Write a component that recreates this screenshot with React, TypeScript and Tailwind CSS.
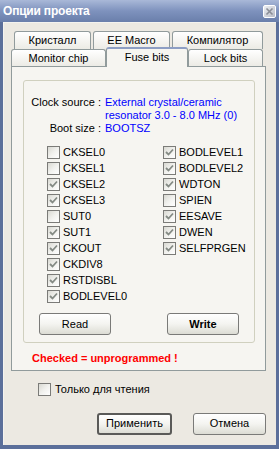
import React from "react";

const leftBits: [string, boolean][] = [
	["CKSEL0", false],
	["CKSEL1", false],
	["CKSEL2", true],
	["CKSEL3", true],
	["SUT0", false],
	["SUT1", true],
	["CKOUT", true],
	["CKDIV8", true],
	["RSTDISBL", true],
	["BODLEVEL0", true],
];

const rightBits: [string, boolean][] = [
	["BODLEVEL1", true],
	["BODLEVEL2", true],
	["WDTON", true],
	["SPIEN", false],
	["EESAVE", true],
	["DWEN", true],
	["SELFPRGEN", true],
];

const Box = ({ checked }: { checked: boolean }) => (
	<span className="w-[13px] h-[13px] shrink-0 border border-[#7b7b78] bg-gradient-to-br from-[#d9d9d2] via-[#f1f1ee] to-white flex items-center justify-center">
		{checked && (
			<svg width="9" height="9" viewBox="0 0 9 9">
				<path d="M1 4 L3.5 6.5 L8 1.5" fill="none" stroke="#848a84" strokeWidth="1.8" />
			</svg>
		)}
	</span>
);

const Check = ({ label, checked }: { label: string; checked: boolean }) => (
	<div className="h-[16px] flex items-center gap-[3px]">
		<Box checked={checked} />
		<span className="leading-none">{label}</span>
	</div>
);

const Tab = ({ label, width }: { label: string; width: string }) => (
	<div
		className={`${width} h-full border border-b-0 border-[#919b9c] rounded-t-[3px] bg-gradient-to-b from-white to-[#ecebe5] flex items-center justify-center`}
	>
		{label}
	</div>
);

const Button = ({
	label,
	bold,
	strong,
}: {
	label: string;
	bold?: boolean;
	strong?: boolean;
}) => (
	<button
		className={`h-[22px] rounded-[3px] bg-gradient-to-b from-white via-[#f4f4f0] to-[#dcdcd4] flex items-center justify-center ${
			strong ? "border-2 border-[#5a5a58]" : "border border-[#7a7a78]"
		} ${bold ? "font-bold" : ""}`}
	>
		{label}
	</button>
);

export default function App() {
	return (
		<div className="w-[279px] h-[449px] flex flex-col bg-[#5b6f9a] font-['Liberation_Sans',Arial,sans-serif] text-[11px] text-black">
			<div className="h-[22px] shrink-0 bg-gradient-to-b from-[#a9b8d8] via-[#7e92bd] to-[#6a7fab] flex items-center justify-between pl-[3px] pr-[3px]">
				<span className="text-white font-bold text-[12px] tracking-[-0.2px]">Опции проекта</span>
				<span className="w-[13px] h-[13px] rounded-[2px] border border-white bg-gradient-to-br from-[#eef0f4] to-[#b8bcc6] flex items-center justify-center">
					<svg width="9" height="9" viewBox="0 0 9 9">
						<path d="M1.5 1.5 L7.5 7.5 M7.5 1.5 L1.5 7.5" stroke="#8a8d96" strokeWidth="1.6" />
					</svg>
				</span>
			</div>

			<div className="flex-1 mx-[3px] mb-[4px] bg-[#ece9e2] border-l border-t border-[#f4f3ef] pl-[7px] pr-[10px] pt-[8px] flex flex-col">
				<div className="w-[255px]">
					<div className="h-[18px] flex gap-[2px] pl-[3px]">
						<Tab label="Кристалл" width="w-[77px]" />
						<Tab label="EE Macro" width="w-[77px]" />
						<Tab label="Компилятор" width="w-[91px]" />
					</div>
					<div className="h-[17px] flex items-end relative z-10">
						<Tab label="Monitor chip" width="w-[95px]" />
						<div className="w-[82px] h-[20px] -mb-px border border-b-0 border-[#919b9c] border-t-2 border-t-[#8d9ec4] rounded-t-[3px] bg-[#f6f5f1] flex items-center justify-center pb-[2px]">
							Fuse bits
						</div>
						<Tab label="Lock bits" width="w-[75px]" />
					</div>

					<div className="h-[305px] border border-[#919b9c] bg-[#f6f5f1] pt-[13px] pl-[11px] pr-[10px]">
						<div className="h-[263px] border border-[#d0d0bf] rounded-[3px] pt-[15px] flex flex-col">
							<div className="grid grid-cols-[77px_1fr] gap-x-[4px] leading-[13px]">
								<span className="text-right">Clock source :</span>
								<span className="text-[#0000ff]">
									External crystal/ceramic
									<br />
									resonator 3.0 - 8.0 MHz (0)
								</span>
								<span className="text-right">Boot size :</span>
								<span className="text-[#0000ff]">BOOTSZ</span>
							</div>

							<div className="flex mt-[9px] pl-[23px]">
								<div className="w-[116px] flex flex-col">
									{leftBits.map(([name, on]) => (
										<Check key={name} label={name} checked={on} />
									))}
								</div>
								<div className="flex flex-col">
									{rightBits.map(([name, on]) => (
										<Check key={name} label={name} checked={on} />
									))}
								</div>
							</div>

							<div className="flex justify-between pl-[15px] pr-[15px] mt-[9px]">
								<div className="w-[72px] flex flex-col">
									<Button label="Read" />
								</div>
								<div className="w-[72px] flex flex-col">
									<Button label="Write" bold />
								</div>
							</div>
						</div>
						<div className="mt-[9px] pl-[9px] text-[#ff0000] font-bold leading-[13px]">
							Checked = unprogrammed !
						</div>
					</div>
				</div>

				<div className="flex items-center gap-[4px] pl-[27px] mt-[10px]">
					<Box checked={false} />
					<span>Только для чтения</span>
				</div>

				<div className="flex justify-end gap-[21px] mt-[15px]">
					<div className="w-[75px] flex flex-col">
						<Button label="Применить" strong />
					</div>
					<div className="w-[73px] flex flex-col">
						<Button label="Отмена" />
					</div>
				</div>
			</div>
		</div>
	);
}
